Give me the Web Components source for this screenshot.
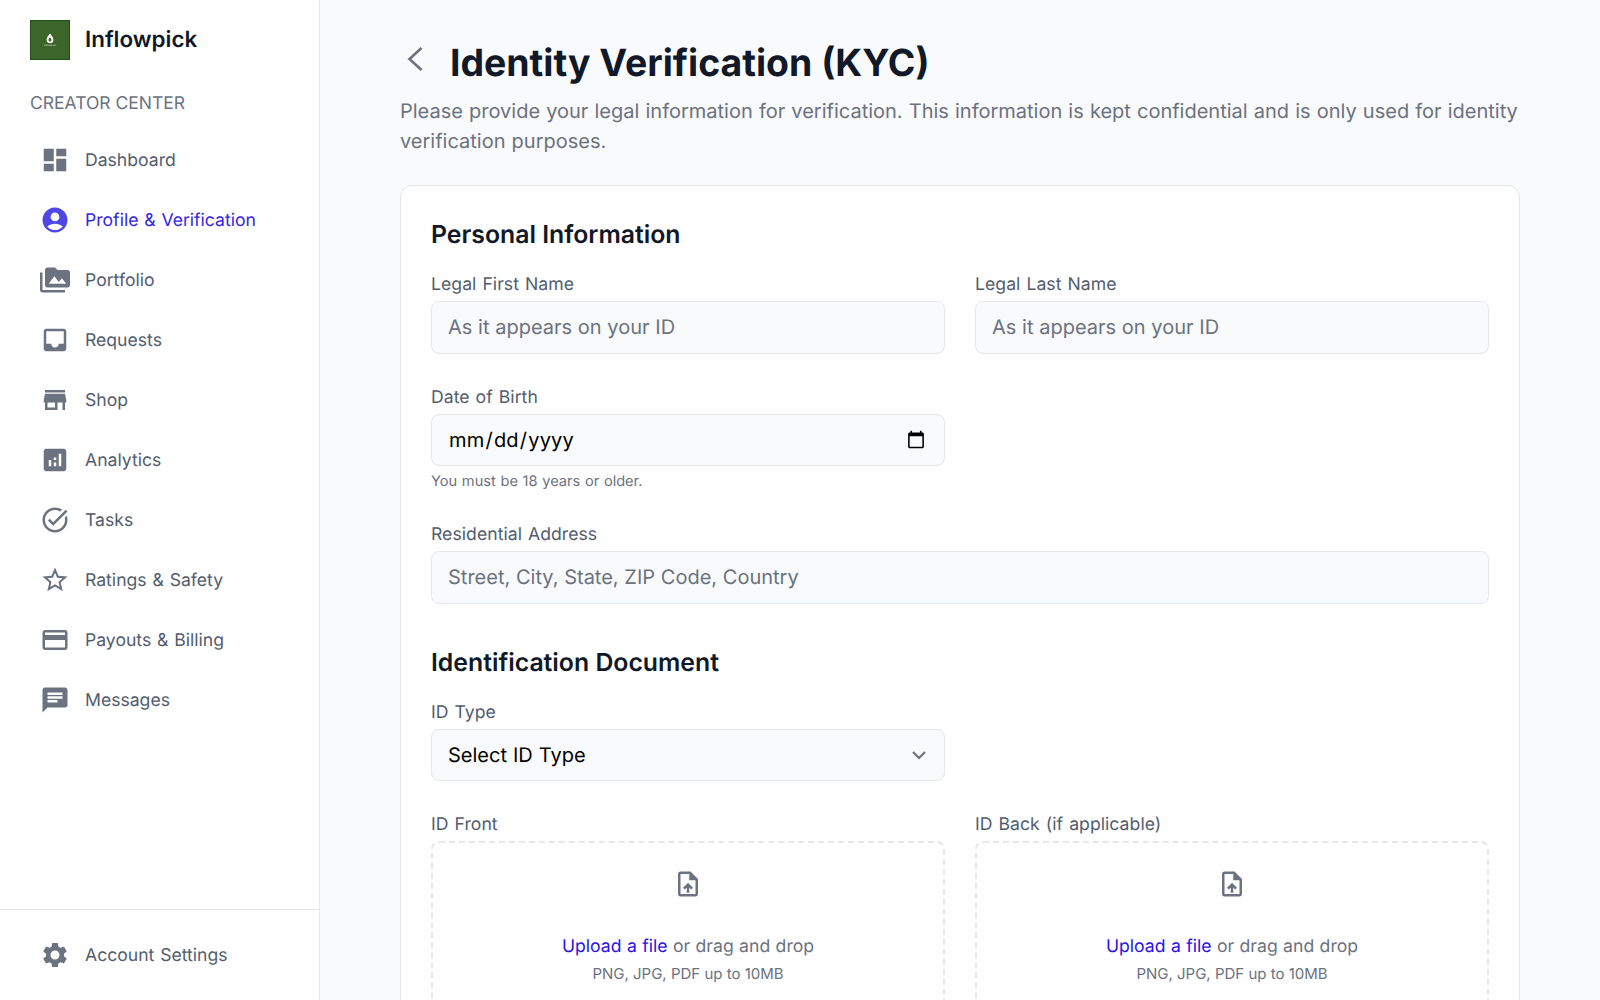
<!DOCTYPE html>
<html lang="en">
<head>
<meta charset="utf-8">
<title>Identity Verification (KYC)</title>
<style>
  html, body { margin: 0; height: 100%; overflow: hidden; }
  body { display: flex; background: #f9fafb; font-family: Inter, "Liberation Sans", sans-serif; color: #111827; text-rendering: geometricPrecision; }
</style>
</head>
<body>

<side-bar>
  <nav-item icon="dashboard">Dashboard</nav-item>
  <nav-item icon="account" active>Profile &amp; Verification</nav-item>
  <nav-item icon="media">Portfolio</nav-item>
  <nav-item icon="inbox">Requests</nav-item>
  <nav-item icon="store">Shop</nav-item>
  <nav-item icon="analytics">Analytics</nav-item>
  <nav-item icon="task">Tasks</nav-item>
  <nav-item icon="star">Ratings &amp; Safety</nav-item>
  <nav-item icon="card">Payouts &amp; Billing</nav-item>
  <nav-item icon="chat">Messages</nav-item>
  <nav-item slot="footer" icon="settings">Account Settings</nav-item>
</side-bar>

<kyc-page>
  <span slot="title">Identity Verification (KYC)</span>
  <span slot="subtitle">Please provide your legal information for verification. This information is kept confidential and is only used for identity verification purposes.</span>

  <form-section heading="Personal Information">
    <form-field label="Legal First Name" placeholder="As it appears on your ID"></form-field>
    <form-field label="Legal Last Name" placeholder="As it appears on your ID"></form-field>
    <form-field label="Date of Birth" type="date" hint="You must be 18 years or older."></form-field>
    <form-field label="Residential Address" placeholder="Street, City, State, ZIP Code, Country" wide></form-field>
  </form-section>

  <form-section heading="Identification Document">
    <form-field label="ID Type" type="select" placeholder="Select ID Type"></form-field>
    <upload-box label="ID Front" newrow></upload-box>
    <upload-box label="ID Back (if applicable)"></upload-box>
  </form-section>
</kyc-page>

<script>
  // material icon paths, 24 unit box
  const ICONS = {
    dashboard: 'M3 13h8V3H3v10zm0 8h8v-6H3v6zm10 0h8V11h-8v10zm0-18v6h8V3h-8z',
    account: 'M12 2C6.48 2 2 6.48 2 12s4.48 10 10 10 10-4.48 10-10S17.52 2 12 2zm0 4c1.93 0 3.5 1.57 3.5 3.5S13.93 13 12 13s-3.5-1.57-3.5-3.5S10.07 6 12 6zm0 14c-2.03 0-4.43-.82-6.14-2.88C7.55 15.8 9.68 15 12 15s4.45.8 6.14 2.12C16.43 19.18 14.03 20 12 20z',
    media: 'M2 6H0v5h.01L0 20c0 1.1.9 2 2 2h18v-2H2V6zm20-2h-8l-2-2H6c-1.1 0-1.99.9-1.99 2L4 16c0 1.1.9 2 2 2h16c1.1 0 2-.9 2-2V6c0-1.1-.9-2-2-2zM7 15l4.5-6 3.5 4.51 2.5-3.01L21 15H7z',
    inbox: 'M19 3H4.99c-1.11 0-1.98.89-1.98 2L3 19c0 1.1.88 2 1.99 2H19c1.1 0 2-.9 2-2V5c0-1.11-.9-2-2-2zm0 12h-4c0 1.66-1.35 3-3 3s-3-1.34-3-3H4.99V5H19v10z',
    store: 'M20 4H4v2h16V4zm1 10v-2l-1-5H4l-1 5v2h1v6h10v-6h4v6h2v-6h1zm-9 4H6v-4h6v4z',
    analytics: 'M19 3H5c-1.1 0-2 .9-2 2v14c0 1.1.9 2 2 2h14c1.1 0 2-.9 2-2V5c0-1.1-.9-2-2-2zM9 17H7v-5h2v5zm4 0h-2v-3h2v3zm0-5h-2v-2h2v2zm4 5h-2V7h2v10z',
    task: 'M22 5.18L10.59 16.6l-4.24-4.24 1.41-1.41 2.83 2.83 10-10L22 5.18zm-2.21 5.04c.13.57.21 1.17.21 1.78 0 4.42-3.58 8-8 8s-8-3.58-8-8 3.58-8 8-8c1.58 0 3.04.46 4.28 1.25l1.44-1.44C16.1 2.67 14.13 2 12 2 6.48 2 2 6.48 2 12s4.48 10 10 10 10-4.48 10-10c0-1.19-.22-2.33-.6-3.39l-1.61 1.61z',
    star: 'M22 9.24l-7.19-.62L12 2 9.19 8.63 2 9.24l5.46 4.73L5.82 21 12 17.27 18.18 21l-1.63-7.03L22 9.24zM12 15.4l-3.76 2.27 1-4.28-3.32-2.88 4.38-.38L12 6.1l1.71 4.04 4.38.38-3.32 2.88 1 4.28L12 15.4z',
    card: 'M20 4H4c-1.11 0-1.99.89-1.99 2L2 18c0 1.11.89 2 2 2h16c1.11 0 2-.89 2-2V6c0-1.11-.89-2-2-2zm0 14H4v-6h16v6zm0-10H4V6h16v2z',
    chat: 'M20 2H4c-1.1 0-1.99.9-1.99 2L2 22l4-4h14c1.1 0 2-.9 2-2V4c0-1.1-.9-2-2-2zM6 9h12v2H6V9zm8 5H6v-2h8v2zm4-6H6V6h12v2z',
    settings: 'M19.14 12.94c.04-.3.06-.61.06-.94 0-.32-.02-.64-.07-.94l2.03-1.58c.18-.14.23-.41.12-.61l-1.92-3.32c-.12-.22-.37-.29-.59-.22l-2.39.96c-.5-.38-1.03-.7-1.62-.94l-.36-2.54c-.04-.24-.24-.41-.48-.41h-3.84c-.24 0-.43.17-.47.41l-.36 2.54c-.59.24-1.13.57-1.62.94l-2.39-.96c-.22-.08-.47 0-.59.22L2.74 8.87c-.12.21-.08.47.12.61l2.03 1.58c-.05.3-.09.63-.09.94s.02.64.07.94l-2.03 1.58c-.18.14-.23.41-.12.61l1.92 3.32c.12.22.37.29.59.22l2.39-.96c.5.38 1.03.7 1.62.94l.36 2.54c.05.24.24.41.48.41h3.84c.24 0 .44-.17.47-.41l.36-2.54c.59-.24 1.13-.56 1.62-.94l2.39.96c.22.08.47 0 .59-.22l1.92-3.32c.12-.22.07-.47-.12-.61l-2.01-1.58zM12 15.6c-1.98 0-3.6-1.62-3.6-3.6s1.62-3.6 3.6-3.6 3.6 1.62 3.6 3.6-1.62 3.6-3.6 3.6z',
    upload: 'M14 2H6c-1.1 0-1.99.9-1.99 2L4 20c0 1.1.89 2 1.99 2H18c1.1 0 2-.9 2-2V8l-6-6zm4 18H6V4h7v5h5v11zM8 15.01l1.41 1.41L11 14.84V19h2v-4.16l1.59 1.59L16 15.01 12.01 11 8 15.01z'
  };

  class SideBar extends HTMLElement {
    connectedCallback() {
      this.attachShadow({ mode: 'open' }).innerHTML = `
        <style>
          :host { display: flex; flex-direction: column; flex: none; box-sizing: border-box; width: 320px; height: 100vh; background: #fff; border-right: 1px solid #e5e7eb; }
          .top { flex: 1; padding: 20px 30px 0; }
          .brand { display: flex; align-items: center; gap: 15px; font-size: 22.4px; font-weight: 600; color: #111827; }
          .brand > span { margin-top: -2px; }
          .logo { display: flex; flex-direction: column; align-items: center; justify-content: center; box-sizing: border-box; width: 40px; height: 40px; background: #3b6529; border: 1px solid #1f4d16; color: #e8f0e4; font-size: 2.5px; font-weight: 400; line-height: 3px; }
          .logo svg { width: 8px; height: 11px; }
          .caption { margin: 31px 0 14px; font-size: 17.5px; line-height: 25px; color: #6b7280; }
          .foot { height: 90px; border-top: 1px solid #e5e7eb; padding: 0 30px; display: flex; align-items: center; }
          ::slotted(nav-item) { width: 100%; }
        </style>
        <div class="top">
          <div class="brand">
            <div class="logo">
              <svg viewBox="0 0 8 11"><path d="M4 .6C5 2.4 7.4 4 7.4 6.8A3.4 3.4 0 0 1 .6 6.8C.6 4 3 2.4 4 .6z" fill="#fff"/><path d="M4 4.2C4.6 5 5.5 5.8 5.5 7A1.5 1.5 0 0 1 2.5 7C2.5 5.8 3.4 5 4 4.2z" fill="#3b6529"/></svg>
              <span>Inflowpick</span>
            </div>
            <span>Inflowpick</span>
          </div>
          <div class="caption">CREATOR CENTER</div>
          <slot></slot>
        </div>
        <div class="foot"><slot name="footer"></slot></div>`;
    }
  }

  class NavItem extends HTMLElement {
    connectedCallback() {
      const d = ICONS[this.getAttribute('icon')];
      this.attachShadow({ mode: 'open' }).innerHTML = `
        <style>
          :host { display: flex; align-items: center; gap: 15px; height: 60px; padding-left: 10px; box-sizing: border-box; font-size: 17.6px; word-spacing: .9px; color: #525c6e; cursor: pointer; }
          :host([active]) { color: #3525e6; }
          svg { width: 30px; height: 30px; fill: #6b7280; flex: none; }
          :host([active]) svg { fill: #4f46e5; }
        </style>
        <svg viewBox="0 0 24 24"><path d="${d}"/></svg>
        <span><slot></slot></span>`;
    }
  }

  class KycPage extends HTMLElement {
    connectedCallback() {
      this.attachShadow({ mode: 'open' }).innerHTML = `
        <style>
          :host { display: block; flex: 1; min-width: 0; height: 100vh; overflow: hidden; box-sizing: border-box; padding: 30px 80px 0; }
          .head { display: flex; align-items: center; gap: 26px; height: 66px; }
          .back { display: block; width: 24px; height: 30px; flex: none; overflow: visible; }
          h1 { margin: 0; font-size: 37.4px; font-weight: 700; color: #111827; }
          p { margin: 0 0 29px; font-size: 20px; line-height: 30px; word-spacing: .5px; color: #6b7280; }
          .card { background: #fff; border: 1px solid #e5e7eb; border-radius: 12px; padding: 30px; display: flex; flex-direction: column; gap: 40px; }
        </style>
        <div class="head">
          <svg class="back" viewBox="0 0 24 30"><path d="M21.5 0 9.5 11 21.5 22" fill="none" stroke="#6b7280" stroke-width="2.6"/></svg>
          <h1><slot name="title"></slot></h1>
        </div>
        <p><slot name="subtitle"></slot></p>
        <div class="card"><slot></slot></div>`;
    }
  }

  class FormSection extends HTMLElement {
    connectedCallback() {
      this.attachShadow({ mode: 'open' }).innerHTML = `
        <style>
          :host { display: block; }
          h2 { margin: 0 0 20px; font-size: 24.8px; line-height: 36px; font-weight: 600; color: #111827; }
          .grid { display: grid; grid-template-columns: 1fr 1fr; column-gap: 30px; row-gap: 31px; }
        </style>
        <h2>${this.getAttribute('heading')}</h2>
        <div class="grid"><slot></slot></div>`;
    }
  }

  const LABEL_CSS = `
    label { display: block; margin-bottom: 3.5px; font-size: 17.6px; line-height: 25.5px; word-spacing: 1px; letter-spacing: .05px; color: #525c6e; }`;

  class FormField extends HTMLElement {
    connectedCallback() {
      const type = this.getAttribute('type') || 'text';
      const ph = this.getAttribute('placeholder') || '';
      const hint = this.getAttribute('hint');
      let control = `<input id="f" type="${type}" placeholder="${ph}">`;
      if (type === 'select') {
        control = `<div class="sel"><select id="f"><option>${ph}</option></select>
          <svg viewBox="0 0 20 20"><path d="M5 7.5l5 5 5-5" fill="none" stroke="#6b7280" stroke-width="1.8"/></svg></div>`;
      }
      this.attachShadow({ mode: 'open' }).innerHTML = `
        <style>
          :host { display: block; min-width: 0; }
          :host([wide]) { grid-column: 1 / -1; }
          :host([type="date"]), :host([type="select"]) { grid-column: 1; }
          ${LABEL_CSS}
          input, select { display: block; box-sizing: border-box; width: 100%; height: 52.5px; padding: 0 16px; margin: 0; border: 1px solid #e5e7eb; border-radius: 8px; background: #f9fafb; font: 400 20px Inter, "Liberation Sans", sans-serif; text-rendering: geometricPrecision; word-spacing: .1px; color: #000; outline: none; }
          input[type="date"] { letter-spacing: .2px; }
          select { word-spacing: .4px; }
          input::placeholder { color: #6b7280; opacity: 1; }
          select { appearance: none; }
          .sel { position: relative; }
          .sel svg { position: absolute; right: 14px; top: 14px; width: 24px; height: 24px; pointer-events: none; }
          .hint { margin-top: 6px; font-size: 14.6px; line-height: 19px; word-spacing: .6px; color: #6b7280; }
        </style>
        <label for="f">${this.getAttribute('label')}</label>
        ${control}
        ${hint ? `<div class="hint">${hint}</div>` : ''}`;
    }
  }

  class UploadBox extends HTMLElement {
    connectedCallback() {
      this.attachShadow({ mode: 'open' }).innerHTML = `
        <style>
          :host { display: block; min-width: 0; }
          :host([newrow]) { grid-column: 1; }
          ${LABEL_CSS}
          .drop { box-sizing: border-box; height: 190px; padding-top: 26px; border: 2px dashed #e5e7eb; border-radius: 8px; text-align: center; }
          svg { display: block; width: 30px; height: 30px; margin: 0 auto 35px; fill: #6b7280; }
          .main { font-size: 17.6px; line-height: 25.5px; word-spacing: .5px; color: #6b7280; }
          a { color: #2a12e8; text-decoration: none; }
          .sub { font-size: 15px; line-height: 28px; color: #6b7280; }
        </style>
        <label>${this.getAttribute('label')}</label>
        <div class="drop">
          <svg viewBox="0 0 24 24"><path d="${ICONS.upload}"/></svg>
          <div class="main"><a href="#">Upload a file</a> or drag and drop</div>
          <div class="sub">PNG, JPG, PDF up to 10MB</div>
        </div>`;
    }
  }

  customElements.define('side-bar', SideBar);
  customElements.define('nav-item', NavItem);
  customElements.define('kyc-page', KycPage);
  customElements.define('form-section', FormSection);
  customElements.define('form-field', FormField);
  customElements.define('upload-box', UploadBox);
</script>
</body>
</html>
